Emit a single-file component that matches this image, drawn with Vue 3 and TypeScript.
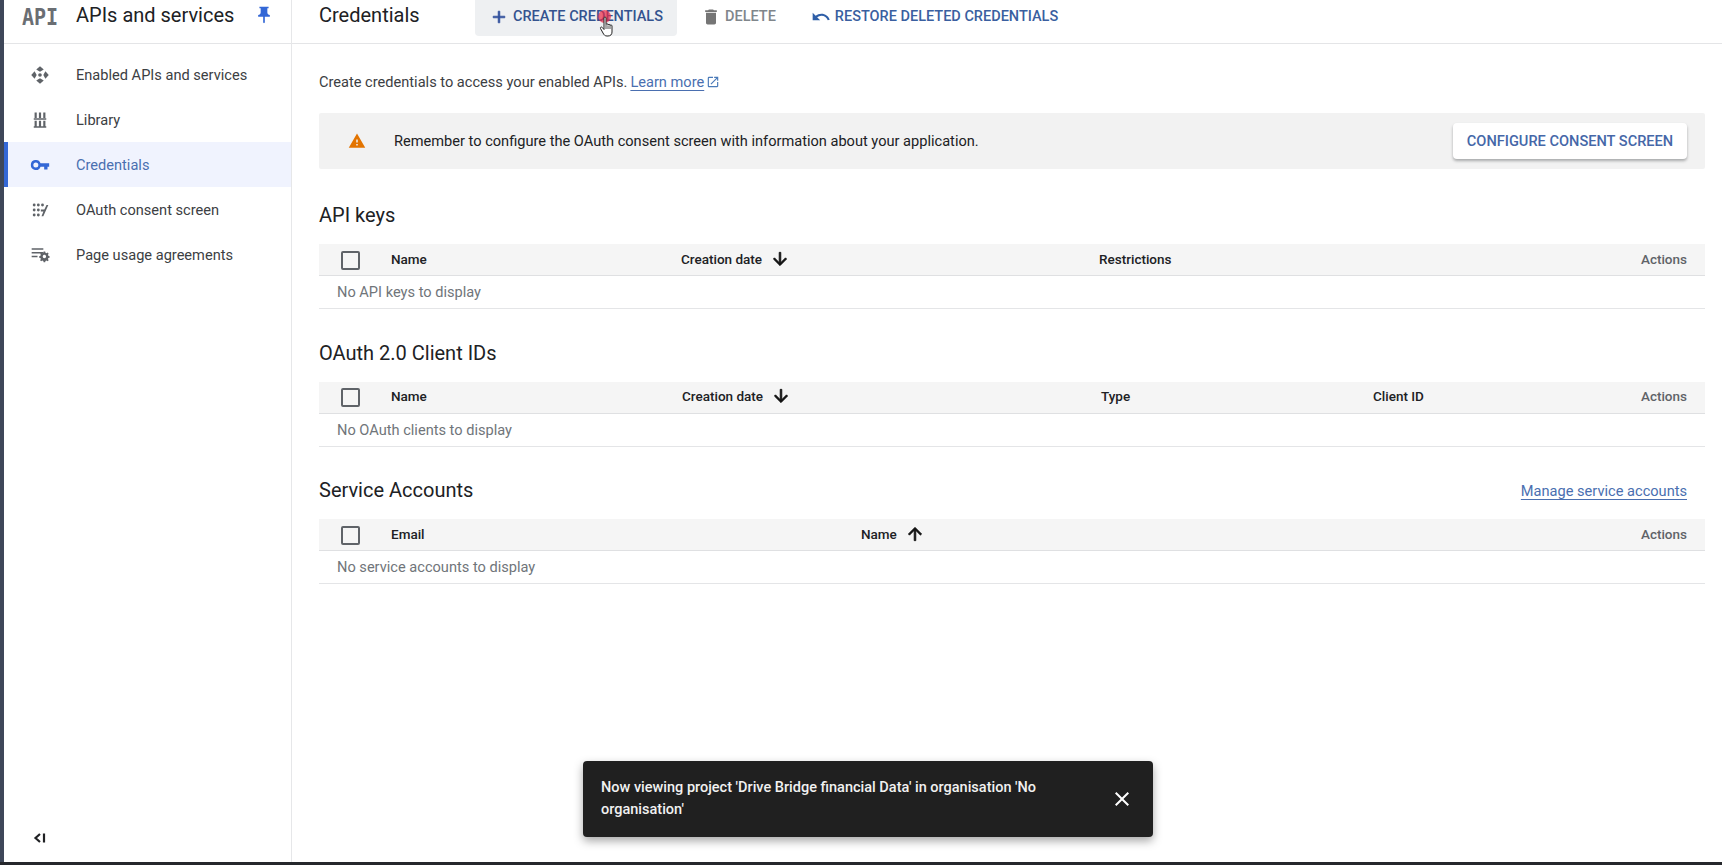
<script setup lang="ts">
interface Column { label: string; sort?: 'down' | 'up' }
interface Section {
  title: string
  link?: string
  template: string
  columns: Column[]
  empty: string
}

const nav = [
  { label: 'Enabled APIs and services', icon: 'enabled' },
  { label: 'Library', icon: 'library' },
  { label: 'Credentials', icon: 'key', active: true },
  { label: 'OAuth consent screen', icon: 'consent' },
  { label: 'Page usage agreements', icon: 'usage' },
]

const sections: Section[] = [
  {
    title: 'API keys',
    template: '72px 290px 418px 1fr 100px',
    columns: [{ label: 'Name' }, { label: 'Creation date', sort: 'down' }, { label: 'Restrictions' }],
    empty: 'No API keys to display',
  },
  {
    title: 'OAuth 2.0 Client IDs',
    template: '72px 291px 419px 272px 1fr 100px',
    columns: [{ label: 'Name' }, { label: 'Creation date', sort: 'down' }, { label: 'Type' }, { label: 'Client ID' }],
    empty: 'No OAuth clients to display',
  },
  {
    title: 'Service Accounts',
    link: 'Manage service accounts',
    template: '72px 470px 1fr 100px',
    columns: [{ label: 'Email' }, { label: 'Name', sort: 'up' }],
    empty: 'No service accounts to display',
  },
]
</script>

<template>
  <div class="page">
    <div class="frame">
      <div class="strip"></div>
      <aside class="sidebar">
        <header class="side-head">
          <span class="logo">API</span>
          <span class="side-title">APIs and services</span>
          <svg class="pin" viewBox="0 0 24 24" width="20" height="20"><path fill="#3367d6" d="M16 9V4h1.500V2h-11v2H8v5c0 1.700-1.300 3-3 3v2h6v7l1 1 1-1v-7h6v-2c-1.700 0-3-1.300-3-3z"/></svg>
        </header>
        <nav class="nav">
          <a v-for="item in nav" :key="item.label" class="nav-item" :class="{ active: item.active }">
            <svg class="nav-icon" viewBox="0 0 24 24" width="20" height="20">
              <g v-if="item.icon === 'enabled'" fill="#5f6368">
                <path d="M12 1.500 16.500 5.500 12 8 7.500 5.500zM12 22.500 7.500 18.500 12 16 16.500 18.500zM1.500 12 5.500 7.500 8 12 5.500 16.500zM22.500 12 18.500 16.500 16 12 18.500 7.500z"/>
                <circle cx="12" cy="12" r="2.200"/>
              </g>
              <g v-else-if="item.icon === 'library'" fill="#5f6368">
                <path d="M5.500 3h2.600v6.500H5.500zM10.700 3h2.600v6.500h-2.600zM15.900 3h2.600v6.500h-2.600zM4.500 10h15v1.800h-15zM5.500 13h2.600v6.500H5.500zM10.700 13h2.600v6.500h-2.600zM15.900 13h2.600v6.500h-2.600zM4.500 19.500h15v1.800h-15z"/>
              </g>
              <path v-else-if="item.icon === 'key'" fill="#3367d6" d="M12.650 10A6 6 0 0 0 1 12a6 6 0 0 0 11.650 2H17v3.500h4V14h2v-4H12.650zM7 15a3 3 0 1 1 0-6 3 3 0 0 1 0 6z"/>
              <g v-else-if="item.icon === 'consent'" fill="#5f6368">
                <circle cx="5" cy="6" r="1.700"/><circle cx="10" cy="6" r="1.700"/><circle cx="15" cy="6" r="1.700"/>
                <circle cx="5" cy="12" r="1.700"/><circle cx="10" cy="12" r="1.700"/>
                <circle cx="5" cy="18" r="1.700"/><circle cx="10" cy="18" r="1.700"/>
                <path d="M13 11.500h4.200l2.600-5.500H22l-6 13.500h-2.200l2.300-5.800H13z"/>
              </g>
              <g v-else fill="#5f6368">
                <path d="M2 4h14v1.800H2zM2 8.500h14v1.800H2zM2 13h7v1.800H2z"/>
                <path fill-rule="evenodd" d="M16.500 10h2l.4 1.700 1.300.6 1.500-.9 1.300 1.400-.9 1.500.5 1.300 1.600.4v2l-1.600.4-.5 1.300.9 1.500-1.300 1.400-1.500-.9-1.300.6-.4 1.600h-2l-.4-1.600-1.300-.6-1.500.9-1.300-1.400.9-1.500-.5-1.300-1.600-.4v-2l1.600-.4.500-1.300-.9-1.500 1.300-1.400 1.500.9 1.300-.6zm1 4.300a2.200 2.200 0 1 0 0 4.400 2.200 2.200 0 0 0 0-4.400z" transform="translate(1 -1.500) scale(.93)"/>
              </g>
            </svg>
            <span>{{ item.label }}</span>
          </a>
        </nav>
        <div class="collapse">
          <svg viewBox="0 0 14 14" width="14" height="14"><path fill="none" stroke="#202124" stroke-width="2.200" d="M7 3 2.500 7 7 11M11 2.500v9"/></svg>
        </div>
      </aside>

      <main class="main">
        <header class="topbar">
          <h1 class="page-title">Credentials</h1>
          <button class="action hovered">
            <svg viewBox="0 0 24 24" width="20" height="20"><path fill="#2f4f9c" stroke="#2f4f9c" stroke-width=".8" d="M19 13h-6v6h-2v-6H5v-2h6V5h2v6h6z"/></svg>
            <span>CREATE CREDENTIALS</span>
          </button>
          <button class="action disabled">
            <svg viewBox="0 0 24 24" width="20" height="20"><path fill="#757575" d="M6 19c0 1.100.9 2 2 2h8c1.100 0 2-.9 2-2V7H6zM19 4h-3.500l-1-1h-5l-1 1H5v2h14z"/></svg>
            <span>DELETE</span>
          </button>
          <button class="action">
            <svg viewBox="0 0 24 24" width="20" height="20"><path fill="#2f5fa8" d="M12.500 8c-2.650 0-5.050 1-6.900 2.600L2 7v9h9l-3.620-3.620A7.950 7.950 0 0 1 12.500 10.500c3.540 0 6.550 2.310 7.600 5.500l2.370-.78C21.080 11.030 17.150 8 12.500 8z"/></svg>
            <span>RESTORE DELETED CREDENTIALS</span>
          </button>
        </header>

        <div class="content">
          <p class="intro">
            Create credentials to access your enabled APIs.
            <a class="link">Learn more</a>
            <svg class="external" viewBox="0 0 24 24" width="14" height="14"><path fill="#4a7ab8" d="M19 19H5V5h7V3H5a2 2 0 0 0-2 2v14a2 2 0 0 0 2 2h14c1.100 0 2-.9 2-2v-7h-2zM14 3v2h3.590l-9.830 9.830 1.410 1.410L19 6.410V10h2V3z"/></svg>
          </p>

          <div class="alert">
            <svg class="warn" viewBox="0 0 24 24" width="18" height="18"><path fill="#e37400" d="M1 21h22L12 2zm12-3h-2v-2h2zm0-4h-2v-4h2z"/></svg>
            <span class="alert-text">Remember to configure the OAuth consent screen with information about your application.</span>
            <button class="raised">CONFIGURE CONSENT SCREEN</button>
          </div>

          <section v-for="section in sections" :key="section.title" class="section">
            <div class="section-head">
              <h2>{{ section.title }}</h2>
              <a v-if="section.link" class="link manage">{{ section.link }}</a>
            </div>
            <div class="thead" :style="{ gridTemplateColumns: section.template }">
              <span class="check-cell"><span class="check"></span></span>
              <span v-for="col in section.columns" :key="col.label" class="th">
                {{ col.label }}
                <svg v-if="col.sort" class="sort" :class="{ up: col.sort === 'up' }" viewBox="0 0 24 24" width="20" height="20"><path fill="#111" stroke="#111" stroke-width=".9" d="M20 12l-1.410-1.410L13 16.170V4h-2v12.170l-5.580-5.590L4 12l8 8z"/></svg>
              </span>
              <span class="th actions">Actions</span>
            </div>
            <div class="tbody">{{ section.empty }}</div>
          </section>
        </div>
      </main>
    </div>
    <div class="bottom"></div>

    <div class="toast">
      <span class="toast-text">Now viewing project 'Drive Bridge financial Data' in organisation 'No organisation'</span>
      <svg class="toast-close" viewBox="0 0 24 24" width="24" height="24"><path fill="#fff" d="M19 6.410 17.590 5 12 10.590 6.410 5 5 6.410 10.590 12 5 17.590 6.410 19 12 13.410 17.590 19 19 17.590 13.410 12z"/></svg>
    </div>

    <div class="pointer">
      <span class="click-dot"></span>
      <svg viewBox="0 0 16 22" width="16" height="22"><path fill="#fff" stroke="#222" stroke-width="1" stroke-linejoin="round" d="M5 2c0-1.300 2-1.300 2 0v6.500c0-1 2-1 2 0v.6c0-1 2-1 2 0v.6c0-1 2-1 2 .2V16c0 2.500-1.500 4-4 4H8c-2 0-3-1-4-3l-2.500-4.500c-.6-1.200 1-2 1.800-1L5 13.500z"/><path fill="none" stroke="#222" stroke-width=".8" d="M7 9v4M9 9.500V13M11 10v3"/></svg>
    </div>
  </div>
</template>

<style scoped>
.page {
  position: relative;
  width: 1722px;
  height: 865px;
  display: flex;
  flex-direction: column;
  overflow: hidden;
  background: #fff;
  color: #202124;
  font-family: Roboto, "Liberation Sans", sans-serif;
  font-size: 14.6px;
}
.frame { flex: 1; display: flex; min-height: 0; }
.strip { width: 4px; background: #3e4759; flex: none; }
.bottom { height: 3px; background: #26282c; flex: none; }

.sidebar {
  width: 288px;
  flex: none;
  display: flex;
  flex-direction: column;
  border-right: 1px solid #e6e7e9;
  box-sizing: border-box;
}
.side-head {
  height: 44px;
  box-sizing: border-box;
  border-bottom: 1px solid #e4e5e7;
  display: flex;
  align-items: center;
  padding: 0 0 13px 18px;
}
.logo {
  width: 54px;
  display: inline-block;
  font-family: "DejaVu Sans Mono", monospace;
  font-weight: 700;
  font-size: 20px;
  color: #6a6e73;
  transform: translateY(2px) scaleY(1.15);
}
.side-title { font-size: 20px; width: 178px; white-space: nowrap; }
.pin { flex: none; }
.nav { padding-top: 8px; flex: 1; }
.nav-item {
  height: 45px;
  display: flex;
  align-items: center;
  padding-left: 22px;
  gap: 26px;
  color: #3c4043;
  border-left: 4px solid transparent;
  box-sizing: border-box;
}
.nav-item.active {
  background: #f0f3fe;
  border-left-color: #3367d6;
  color: #4a6fb0;
}
.nav-icon { flex: none; }
.collapse { height: 31px; padding-left: 29px; box-sizing: border-box; }
.collapse svg { display: block; }

.main { flex: 1; min-width: 0; display: flex; flex-direction: column; }
.topbar {
  height: 44px;
  box-sizing: border-box;
  border-bottom: 1px solid #e4e5e7;
  display: flex;
  align-items: flex-start;
  padding-left: 27px;
}
.page-title { margin: 4px 0 0; font-size: 20px; font-weight: 400; width: 156px; line-height: 23px; }
.action {
  height: 36px;
  border: 0;
  border-radius: 0 0 4px 4px;
  background: transparent;
  font: 500 14.5px Roboto, sans-serif;
  color: #3a5fa0;
  display: flex;
  align-items: center;
  gap: 4px;
  padding: 0 14px 3px 14px;
  margin-right: 6px;
  white-space: nowrap;
}
.action.hovered { background: #eef0f2; margin-right: 10px; color: #34538f; }
.action.disabled { color: #80868b; margin-right: 7px; }
.content { padding: 0 17px 0 27px; }
.intro {
  margin: 0;
  height: 69px;
  display: flex;
  align-items: center;
  padding-top: 6px;
  box-sizing: border-box;
  gap: 3px;
  color: #3c4043;
}
.link { color: #4a6fb0; text-decoration: underline; text-underline-offset: 3px; }
.external { margin-left: -1px; }
.alert {
  height: 56px;
  background: #f2f2f2;
  display: flex;
  align-items: center;
  padding: 0 18px 0 29px;
  border-radius: 2px;
}
.warn { flex: none; }
.alert-text { flex: 1; margin-left: 28px; color: #202124; }
.raised {
  width: 234px;
  height: 36px;
  border: 0;
  border-radius: 4px;
  background: #fff;
  box-shadow: 0 2px 3px rgba(60, 64, 67, .4);
  color: #4567a8;
  font: 500 14.6px Roboto, sans-serif;
  white-space: nowrap;
}
.section { margin-top: 27px; }
.section + .section { margin-top: 24.5px; }
.section-head {
  height: 37px;
  display: flex;
  align-items: center;
  justify-content: space-between;
  padding-right: 18px;
  margin-bottom: 11px;
}
.section + .section h2 { padding-top: 1px; }
.section-head h2 { margin: 0; font-size: 20px; font-weight: 400; color: #202124; }
.manage { padding-top: 3px; }
.thead {
  height: 32px;
  background: #f5f5f5;
  display: grid;
  align-items: center;
  border-bottom: 1px solid #dfe0e2;
  box-sizing: border-box;
}
.check-cell { display: flex; padding-left: 22px; }
.check {
  width: 15px;
  height: 15px;
  border: 2px solid #5f6368;
  border-radius: 2px;
  margin-top: 1px;
}
.th {
  font-weight: 500;
  font-size: 13.5px;
  color: #202124;
  display: flex;
  align-items: center;
  gap: 8px;
  white-space: nowrap;
  margin-top: -2px;
}
.sort { flex: none; }
.sort.up { transform: rotate(180deg); }
.actions { justify-content: flex-end; color: #5f6368; padding-right: 18px; }
.tbody {
  height: 33px;
  box-sizing: border-box;
  border-bottom: 1px solid #e4e5e7;
  display: flex;
  align-items: center;
  padding-left: 18px;
  color: #70757a;
}

.toast {
  position: absolute;
  left: 583px;
  top: 761px;
  width: 570px;
  height: 76px;
  box-sizing: border-box;
  padding: 0 19px 0 18px;
  background: #202020;
  border-radius: 4px;
  box-shadow: 0 4px 10px rgba(0, 0, 0, .35);
  color: #f1f1f1;
  font-weight: 500;
  font-size: 14.5px;
  display: flex;
  align-items: center;
  line-height: 22px;
}
.toast-text { width: 450px; }
.toast-close { margin-left: auto; }

.pointer {
  position: absolute;
  left: 599px;
  top: 10px;
  width: 16px;
  height: 28px;
}
.pointer svg { position: absolute; left: 0; top: 6px; }
.click-dot {
  position: absolute;
  left: -1px;
  top: 0;
  width: 13px;
  height: 13px;
  border-radius: 50%;
  background: rgba(235, 40, 70, .7);
}
</style>

<style>
html, body { margin: 0; background: #fff; overflow: hidden; }
</style>
